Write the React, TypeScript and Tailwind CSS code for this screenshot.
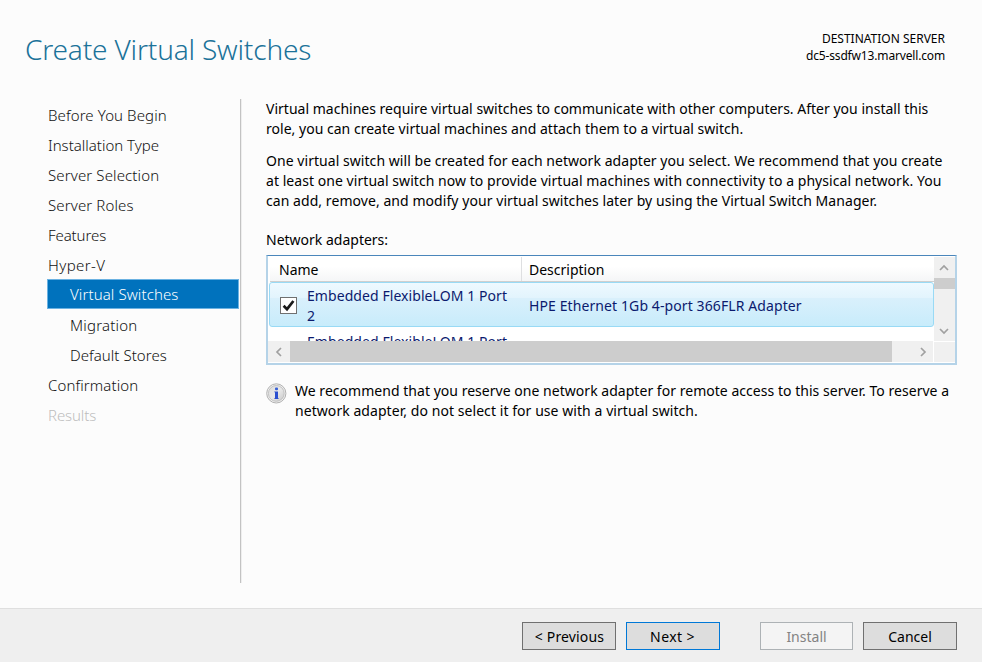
const steps = [
  { label: "Before You Begin", tracking: "tracking-[0.1px]" },
  { label: "Installation Type", tracking: "tracking-normal" },
  { label: "Server Selection", tracking: "tracking-[0.12px]" },
  { label: "Server Roles", tracking: "tracking-[0.12px]" },
  { label: "Features", tracking: "tracking-[-0.1px]" },
  { label: "Hyper-V", tracking: "tracking-[0.4px]" },
  { label: "Virtual Switches", tracking: "tracking-[0.1px]", nested: true, active: true },
  { label: "Migration", tracking: "tracking-[0.2px]", nested: true },
  { label: "Default Stores", tracking: "tracking-[0.05px]", nested: true },
  { label: "Confirmation", tracking: "tracking-[0.1px]" },
  { label: "Results", tracking: "tracking-[-0.1px]", disabled: true },
];

function Steps() {
  return (
    <nav className="h-[485px] w-[242px] shrink-0 pt-px">
      <div className="flex h-full">
        <ul className="w-[240px] pr-px pl-[47px]">
          {steps.map((s) => (
            <li
              key={s.label}
              className={`flex h-[30px] items-center text-[15px] font-light whitespace-nowrap ${s.tracking} ${
                s.active
                  ? "border border-[#6bb2e2] bg-[#0072bd] pt-px pl-[22px] text-white"
                  : s.nested
                    ? "pt-[2px] pl-[23px]"
                    : "pt-[2px] pl-px"
              } ${s.disabled ? "text-[#bdbdbd]" : s.active ? "" : "text-[#111]"}`}
            >
              {s.label}
            </li>
          ))}
        </ul>
        <div className="w-[2px] border-r border-l border-r-[#eeeeee] border-l-[#c3c3c3]" />
      </div>
    </nav>
  );
}

function Chevron({ d }: { d: string }) {
  return (
    <svg width="10" height="10" viewBox="0 0 10 10" fill="none" stroke="#a0a0a0" strokeWidth="1.7">
      <path d={d} />
    </svg>
  );
}

function Checkbox() {
  return (
    <svg width="17" height="17" viewBox="0 0 17 17" className="shrink-0">
      <rect x="0.5" y="0.5" width="16" height="16" fill="#fff" stroke="#707070" />
      <path d="M3.6 8.8 7 12.2 13.4 4" fill="none" stroke="#1a1a1a" strokeWidth="2.7" />
    </svg>
  );
}

function InfoIcon() {
  return (
    <svg width="21" height="21" viewBox="0 0 21 21" className="shrink-0">
      <defs>
        <linearGradient id="disc" x1="0" y1="0" x2="1" y2="1">
          <stop offset="0" stopColor="#dcdcdc" />
          <stop offset="0.5" stopColor="#e9e9e9" />
          <stop offset="1" stopColor="#c8c8c8" />
        </linearGradient>
      </defs>
      <circle cx="10.3" cy="10.4" r="9.6" fill="#f0f0f0" stroke="#b2b2b2" strokeWidth="1" />
      <circle cx="10.3" cy="10.4" r="7.9" fill="url(#disc)" stroke="#b8b8b8" strokeWidth="0.8" />
      <rect x="9" y="4.4" width="3" height="2.8" rx="1" fill="#3a62d6" />
      <path d="M8.3 8.4H12V15.2h.7v.9H8.3v-.9H9V9.3h-.7z" fill="#2a4fd0" />
    </svg>
  );
}

function AdapterTable() {
  return (
    <div className="flex h-[110px] w-[691px] flex-col border-2 border-t border-[#b5d3e8] border-t-[#4a86bb] bg-white pt-px">
      <div className="flex h-[84px]">
        <div className="flex w-[666px] flex-col overflow-hidden">
          <div className="ml-[2px] flex h-[25px] shrink-0 items-center border-b border-[#cfcfcf] bg-gradient-to-b from-white from-40% to-[#f5f6f7]">
            <div className="flex h-full w-[252px] items-center border-r border-[#dedfe1] pt-[2px] pl-[9px]">Name</div>
            <div className="pt-[2px] pl-[7px]">Description</div>
          </div>
          <div className="ml-px flex h-[45px] shrink-0 items-center rounded-[3px] border border-[#99daf5] bg-[linear-gradient(to_bottom,#eef9ff_0%,#e2f4fd_35%,#d9f0fc_36%,#c8ecfb_100%)] text-[#0b1a6e]">
            <div className="flex w-[251px] items-center pl-[10px]">
              <div className="pt-px">
                <Checkbox />
              </div>
              <div className="pt-[2px] pl-[10px] leading-5 tracking-[0.07px]">
                Embedded FlexibleLOM 1 Port
                <br />2
              </div>
            </div>
            <div className="pt-[2px] pl-[8px] tracking-[0.1px]">HPE Ethernet 1Gb 4-port 366FLR Adapter</div>
          </div>
          <div className="h-[14px] shrink-0 overflow-hidden pt-[5px] pl-[39px] leading-5 tracking-[0.07px] text-[#0b1a6e]">
            Embedded FlexibleLOM 1 Port
          </div>
        </div>
        <div className="flex w-[21px] flex-col items-center bg-[#f0f0f0] pr-px">
          <div className="flex h-[21px] items-center pt-[1px]">
            <Chevron d="M1 7 5 3 9 7" />
          </div>
          <div className="-mr-px h-[11px] w-[21px] bg-[#cdcdcd]" />
          <div className="flex grow items-end pb-[5px]">
            <Chevron d="M1 3 5 7 9 3" />
          </div>
        </div>
      </div>
      <div className="flex h-[21px] w-[687px] bg-[#f0f0f0]">
        <div className="flex w-[22px] items-center justify-center">
          <Chevron d="M7 1 3 5 7 9" />
        </div>
        <div className="w-[602px] bg-[#cdcdcd]" />
        <div className="flex w-[42px] items-center justify-end border-r border-white pr-[5px]">
          <Chevron d="M3 1 7 5 3 9" />
        </div>
        <div className="grow border-t border-white" />
      </div>
    </div>
  );
}

export default function App() {
  return (
    <div className="flex h-[662px] w-[982px] flex-col overflow-hidden bg-[#fcfcfc] font-['Noto_Sans',sans-serif] text-[14px] text-black">
      <header className="flex h-[98px] shrink-0 justify-between pt-[30px] pr-[37px] pl-[25px]">
        <h1 className="-mt-px text-[28px] leading-10 font-light tracking-[-0.17px] text-[#1b7299]">Create Virtual Switches</h1>
        <div className="text-right text-[12px] leading-[17px]">
          <div>DESTINATION SERVER</div>
          <div className="tracking-[-0.16px]">dc5-ssdfw13.marvell.com</div>
        </div>
      </header>

      <div className="flex h-[510px] shrink-0">
        <Steps />
        <main className="flex flex-col pt-px pl-[24px] leading-5 whitespace-nowrap">
          <p>
            <span className="tracking-[0.01px]">
              Virtual machines require virtual switches to communicate with other computers. After you install this
            </span>
            <br />
            <span className="tracking-[0.02px]">
              role, you can create virtual machines and attach them to a virtual switch.
            </span>
          </p>
          <p className="mt-3">
            <span className="tracking-[0.05px]">
              One virtual switch will be created for each network adapter you select. We recommend that you create
            </span>
            <br />
            <span className="tracking-[0.05px]">
              at least one virtual switch now to provide virtual machines with connectivity to a physical network. You
            </span>
            <br />
            <span className="tracking-[0.06px]">
              can add, remove, and modify your virtual switches later by using the Virtual Switch Manager.
            </span>
          </p>
          <div className="mt-[19px] mb-[5px]">Network adapters:</div>
          <AdapterTable />
          <div className="mt-[16px] flex">
            <div className="pt-[2px]">
              <InfoIcon />
            </div>
            <p className="pl-[8px]">
              <span className="tracking-[0.03px]">
                We recommend that you reserve one network adapter for remote access to this server. To reserve a
              </span>
              <br />
              <span className="tracking-[0.06px]">network adapter, do not select it for use with a virtual switch.</span>
            </p>
          </div>
        </main>
      </div>

      <footer className="flex h-[54px] shrink-0 border-t border-[#dfdfdf] bg-[#efefef] pt-[13px] pl-[522px]">
        <button className="h-[28px] w-[94px] border border-[#707070] bg-[#dddddd] pl-px tracking-[0.15px]">&lt; Previous</button>
        <button className="ml-[10px] h-[28px] w-[94px] border border-[#0078d7] bg-[#dddddd] pr-px tracking-[0.4px]">
          Next &gt;
        </button>
        <button className="ml-[40px] h-[28px] w-[93px] border border-[#adb2b5] bg-[#f4f4f4] text-[#838383]">Install</button>
        <button className="ml-[10px] h-[28px] w-[94px] border border-[#707070] bg-[#dddddd]">Cancel</button>
      </footer>
    </div>
  );
}
